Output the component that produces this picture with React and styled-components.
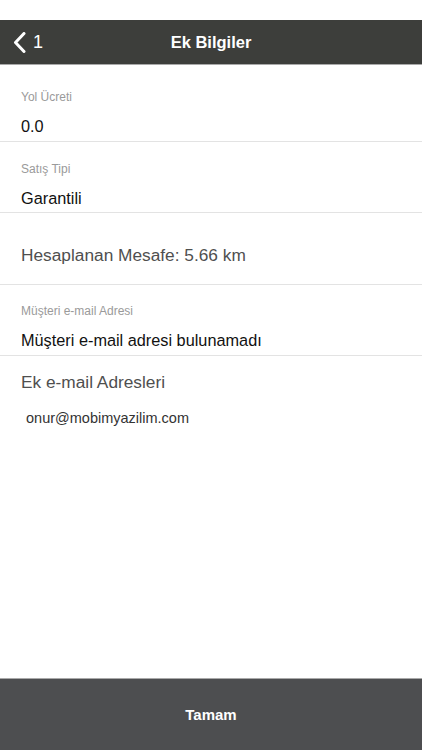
import React from "react";
import styled, { createGlobalStyle } from "styled-components";

const Global = createGlobalStyle`
  html, body { margin: 0; padding: 0; background: #ffffff; }
  body { font-family: "Liberation Sans", Arial, sans-serif; -webkit-font-smoothing: antialiased; }
  * { box-sizing: border-box; }
`;

const Screen = styled.div`
  width: 422px;
  height: 750px;
  display: flex;
  flex-direction: column;
  background: #ffffff;
  overflow: hidden;
`;

const StatusBar = styled.div`
  height: 20px;
  flex: none;
  background: #ffffff;
`;

const NavBar = styled.div`
  height: 45px;
  flex: none;
  background: #3d3e3b;
  border-bottom: 1px solid #a9a9a9;
  display: grid;
  grid-template-columns: 80px 1fr 80px;
  align-items: center;
  color: #ffffff;
`;

const BackButton = styled.div`
  display: flex;
  align-items: center;
  gap: 7px;
  padding-left: 13px;
  font-size: 18px;
`;

const Title = styled.div`
  text-align: center;
  font-size: 16.5px;
  font-weight: bold;
`;

const Content = styled.div`
  flex: 1;
  display: flex;
  flex-direction: column;
`;

const FieldRow = styled.div`
  height: ${(p) => p.$h}px;
  padding: ${(p) => p.$pt}px 21px 0;
  border-bottom: ${(p) => (p.$noBorder ? "none" : "1px solid #e3e3e3")};
  display: flex;
  flex-direction: column;
  flex: none;
`;

const Label = styled.div`
  font-size: 12px;
  color: #9a9a9a;
  line-height: 14px;
`;

const Value = styled.div`
  font-size: 16.3px;
  color: #111111;
  line-height: 20px;
  margin-top: 12px;
`;

const Info = styled.div`
  font-size: 17.3px;
  color: #4f4f4f;
  line-height: 20px;
`;

const Email = styled.div`
  font-size: 14.5px;
  color: #333333;
  padding: 10px 26px 0;
  line-height: 16px;
`;

const Footer = styled.div`
  height: 72px;
  flex: none;
  background: #4d4e50;
  border-top: 1px solid #a9a9a9;
  display: flex;
  align-items: center;
  justify-content: center;
  color: #ffffff;
  font-size: 15px;
  font-weight: bold;
`;

export default function App() {
  return (
    <>
      <Global />
      <Screen>
        <StatusBar />
        <NavBar>
          <BackButton>
            <svg width="13" height="21" viewBox="0 0 13 21">
              <path d="M11 1.5 L2.5 10.5 L11 19.5" stroke="#ffffff" strokeWidth="3" fill="none" strokeLinecap="round" strokeLinejoin="round" />
            </svg>
            <span>1</span>
          </BackButton>
          <Title>Ek Bilgiler</Title>
          <div />
        </NavBar>
        <Content>
          <FieldRow $h={77} $pt={25}>
            <Label>Yol Ücreti</Label>
            <Value>0.0</Value>
          </FieldRow>
          <FieldRow $h={71} $pt={20}>
            <Label>Satış Tipi</Label>
            <Value>Garantili</Value>
          </FieldRow>
          <FieldRow $h={72} $pt={32}>
            <Info>Hesaplanan Mesafe: 5.66 km</Info>
          </FieldRow>
          <FieldRow $h={71} $pt={19}>
            <Label>Müşteri e-mail Adresi</Label>
            <Value>Müşteri e-mail adresi bulunamadı</Value>
          </FieldRow>
          <FieldRow $h={44} $pt={16} $noBorder>
            <Info>Ek e-mail Adresleri</Info>
          </FieldRow>
          <Email>onur@mobimyazilim.com</Email>
        </Content>
        <Footer>Tamam</Footer>
      </Screen>
    </>
  );
}
